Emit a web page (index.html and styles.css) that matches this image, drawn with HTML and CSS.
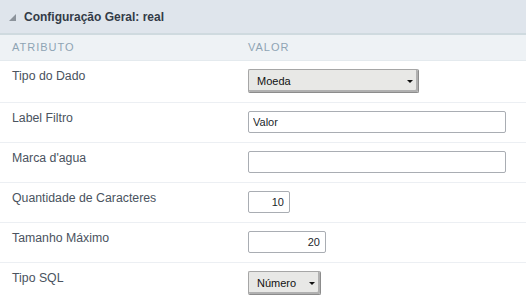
FILE: index.html
```html
<!DOCTYPE html>
<html lang="pt">
<head>
  <meta charset="UTF-8">
  <meta name="viewport" content="width=device-width, initial-scale=1.0">
  <title>Configuração Geral</title>
  <link rel="stylesheet" href="styles.css">
</head>
<body>

  <div class="panel">
    <div class="panel-title">
      <span class="toggle"></span>
      Configuração Geral: real
    </div>

    <div class="grid">
      <div class="head">Atributo</div>
      <div class="head">Valor</div>

      <div class="label">Tipo do Dado</div>
      <div class="field">
        <span class="select-wrap">
          <select class="select wide">
            <option>Moeda</option>
          </select>
        </span>
      </div>

      <div class="label">Label Filtro</div>
      <div class="field"><input class="input full" type="text" value="Valor"></div>

      <div class="label">Marca d'agua</div>
      <div class="field"><input class="input full" type="text"></div>

      <div class="label">Quantidade de Caracteres</div>
      <div class="field"><input class="input num small" type="text" value="10"></div>

      <div class="label">Tamanho Máximo</div>
      <div class="field"><input class="input num medium" type="text" value="20"></div>

      <div class="label">Tipo SQL</div>
      <div class="field">
        <span class="select-wrap">
          <select class="select short">
            <option>Número</option>
          </select>
        </span>
      </div>
    </div>
  </div>

</body>
</html>
```

FILE: styles.css
```css
body { margin: 0; font-family: "Liberation Sans", Arial, sans-serif; background: #fff; }

.panel-title { height: 33px; display: flex; align-items: center; gap: 8px; padding-left: 9px; background: #dfe5ec; border-bottom: 2px solid #cfdadf; font-size: 12px; font-weight: bold; color: #333b47; }
.toggle { width: 0; height: 0; border-left: 7px solid transparent; border-bottom: 7px solid #8c939b; margin-top: 1px; }

.grid { display: grid; grid-template-columns: 236px 1fr; }
.head { height: 25px; line-height: 25px; padding-left: 12px; background: #eef2f5; font-size: 11px; letter-spacing: 1px; text-transform: uppercase; color: #8ea4b4; border-bottom: 1px solid #e4eaee; }

.label, .field { border-bottom: 1px solid #eceff3; padding-left: 12px; }
.label { padding-top: 8px; font-size: 12.3px; line-height: 14px; color: #4a5360; }
.field { padding-top: 8px; padding-bottom: 9px; }

.input { box-sizing: border-box; height: 22px; border: 1px solid #a9adb3; border-radius: 2px; padding: 0 4px; font-family: Arial, "Liberation Sans", sans-serif; font-size: 11px; color: #1c1f2b; background: #fff; display: block; }
.input.full { width: 258px; }
.input.num { text-align: right; padding-right: 5px; }
.input.small { width: 42px; }
.input.medium { width: 78px; }

.select-wrap { position: relative; display: inline-block; vertical-align: top; }
.select-wrap::after { content: ""; position: absolute; right: 6px; top: 11px; border-left: 3px solid transparent; border-right: 3px solid transparent; border-top: 3px solid #111; pointer-events: none; }
.select { appearance: none; -webkit-appearance: none; box-sizing: border-box; height: 24px; border: 1px solid #a6a6a6; border-right-color: #8c8c8c; border-bottom-color: #8c8c8c; border-radius: 2px; box-shadow: inset -2px -2px 0 #b0b0b0; background: #e8e8e6; font-family: Arial, "Liberation Sans", sans-serif; font-size: 11px; color: #111; padding: 0 8px; display: block; }
.select.wide { width: 171px; }
.select.short { width: 73px; }
```
